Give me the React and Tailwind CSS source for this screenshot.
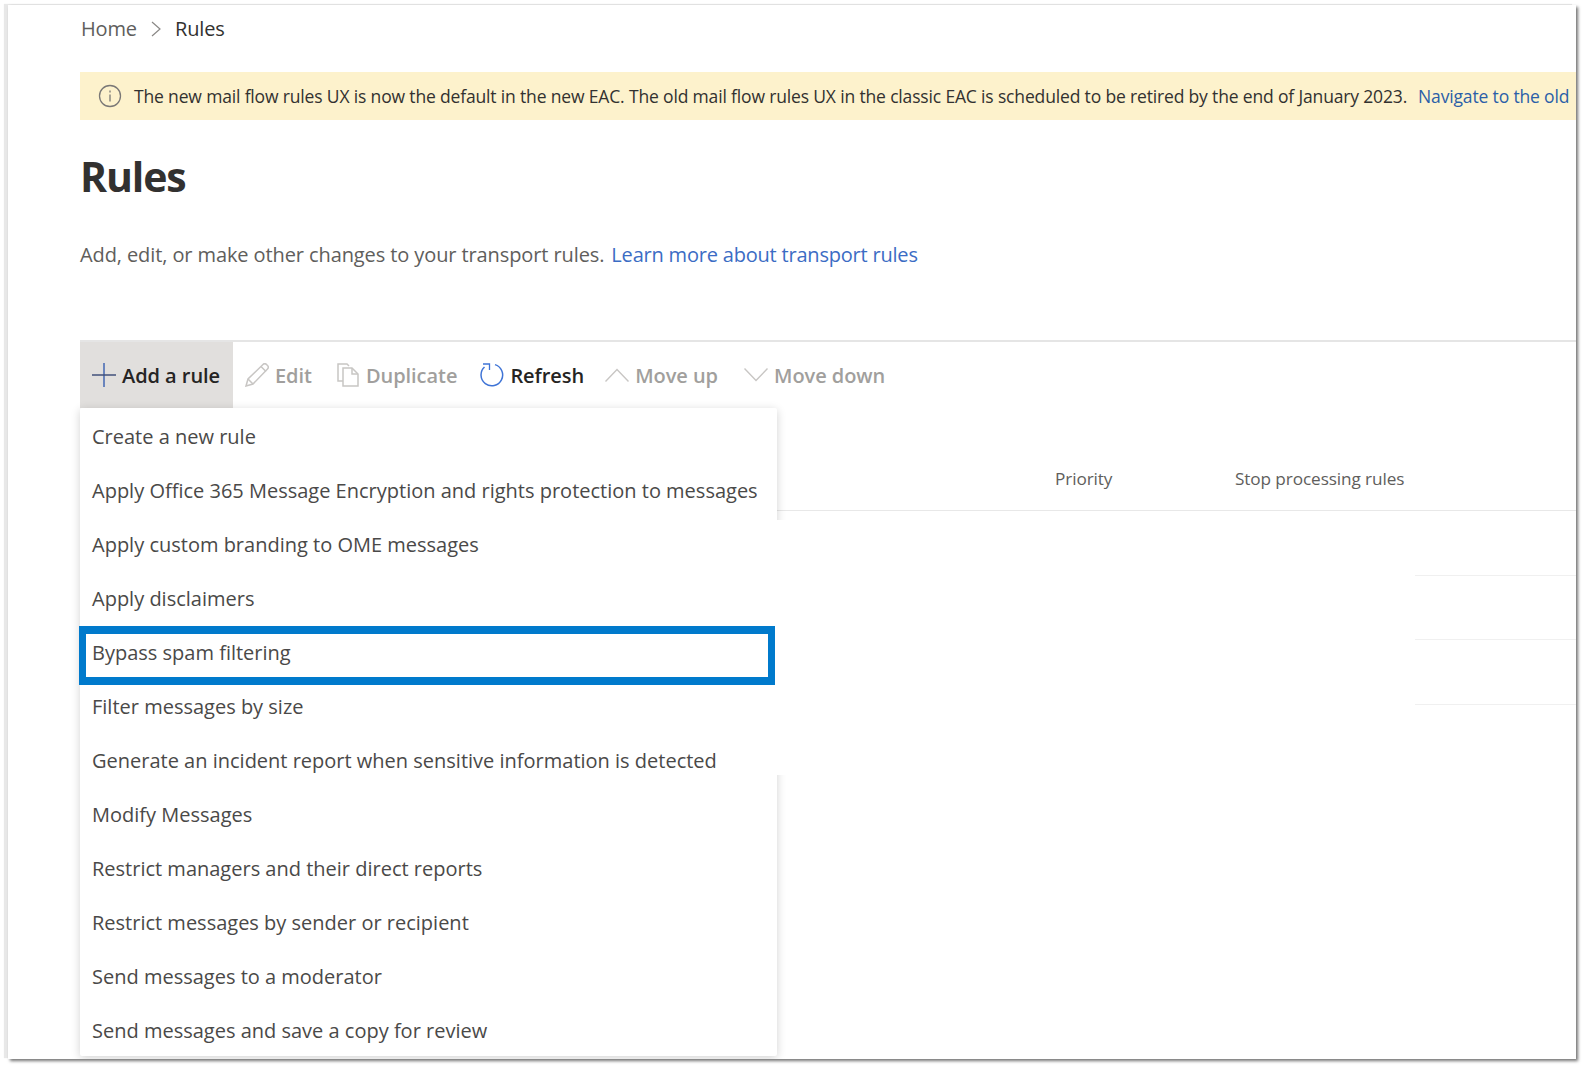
import React from "react";

const font = { fontFamily: '"Open Sans", "Noto Sans", sans-serif' };

const items = [
  "Create a new rule",
  "Apply Office 365 Message Encryption and rights protection to messages",
  "Apply custom branding to OME messages",
  "Apply disclaimers",
  "Bypass spam filtering",
  "Filter messages by size",
  "Generate an incident report when sensitive information is detected",
  "Modify Messages",
  "Restrict managers and their direct reports",
  "Restrict messages by sender or recipient",
  "Send messages to a moderator",
  "Send messages and save a copy for review",
];

function Tool({ icon, label, active, className = "" }) {
  return (
    <div className={`flex items-center h-full ${className}`}>
      <span className="flex items-center justify-center w-[24px]">{icon}</span>
      <span className={`ml-[6px] pt-[2px] text-[20px] font-semibold tracking-[-0.05px] ${active ? "text-[#252423]" : "text-[#a19f9d]"}`}>{label}</span>
    </div>
  );
}

export default function App() {
  return (
    <div className="w-[1585px] h-[1068px] bg-white overflow-hidden pt-[5px] pl-[8px]" style={font}>
      <div className="relative w-[1568px] h-[1054px] bg-white shadow-[2px_2px_3px_rgba(0,0,0,0.55),-4px_-1px_1px_rgba(0,0,0,0.09)] pl-[72px] overflow-hidden">
        <div className="flex items-center h-[48px] text-[20px] tracking-[-0.15px]">
          <span className="text-[#605e5c] ml-[1px]">Home</span>
          <svg className="ml-[13px] mr-[13px]" width="12" height="18" viewBox="0 0 12 18" fill="none" stroke="#8a8886" strokeWidth="1.2"><path d="M2 2l8 7-8 7" /></svg>
          <span className="text-[#323130]">Rules</span>
        </div>

        <div className="mt-[19px] h-[48px] bg-[#fdf2cc] flex items-center overflow-hidden whitespace-nowrap">
          <svg className="ml-[18px] shrink-0" width="24" height="24" viewBox="0 0 24 24" fill="none" stroke="#7a7876" strokeWidth="1.3">
            <circle cx="12" cy="12" r="10.5" />
            <path d="M12 10.5v7M12 6.5v2" />
          </svg>
          <span className="ml-[12px] text-[17.5px] tracking-[-0.16px] text-[#323130]">The new mail flow rules UX is now the default in the new EAC. The old mail flow rules UX in the classic EAC is scheduled to be retired by the end of January 2023.</span>
          <span className="ml-[11px] text-[17.5px] tracking-[-0.16px] text-[#2b5fa8]">Navigate to the old</span>
        </div>

        <h1 className="mt-[29px] h-[56px] flex items-center text-[41px] font-bold tracking-[-1.1px] text-[#323130]">Rules</h1>

        <p className="mt-[30px] h-[40px] flex items-center text-[20px] tracking-[-0.1px] text-[#605e5c]">
          Add, edit, or make other changes to your transport rules.
          <span className="ml-[7px] tracking-[-0.2px] text-[#3b6cc4]">Learn more about transport rules</span>
        </p>

        <div className="mt-[65px] border-t-2 border-[#e5e5e5] h-[68px] flex items-stretch">
          <Tool
            active
            label="Add a rule"
            className="w-[153px] pl-[12px] bg-[#e1dfdd]"
            icon={<svg width="24" height="24" viewBox="0 0 24 24" fill="none" stroke="#4267b2" strokeWidth="1.5"><path d="M12 0v24" /><path d="M0 12h24" stroke="#41507a" /></svg>}
          />
          <Tool
            label="Edit"
            className="ml-[12px]"
            icon={<svg width="24" height="24" viewBox="0 0 24 24" fill="none" stroke="#c8c6c4" strokeWidth="1.5"><path d="M1 23l2-7L18 1.5a2.5 2.5 0 0 1 3.5 0l1 1a2.5 2.5 0 0 1 0 3.5L8 21l-7 2z" /><path d="M3 16l5 5M16 3.5l5 5" /></svg>}
          />
          <Tool
            label="Duplicate"
            className="ml-[24px]"
            icon={<svg width="22" height="24" viewBox="0 0 22 24" fill="none" stroke="#c8c6c4" strokeWidth="1.5"><path d="M6 18H1V1h9l2 2" /><path d="M6 5h9l6 6v12H6z" /><path d="M15 5v6h6" /></svg>}
          />
          <Tool
            active
            label="Refresh"
            className="ml-[23px]"
            icon={<svg width="24" height="24" viewBox="0 0 24 24" fill="none" stroke="#3f74d6" strokeWidth="1.5"><path d="M4.5 4A10.8 10.8 0 1 0 15 1.6" /><path d="M3 1H9.5V7" strokeWidth="1.3" /></svg>}
          />
          <Tool
            label="Move up"
            className="ml-[21px]"
            icon={<svg width="24" height="14" viewBox="0 0 24 14" fill="none" stroke="#c8c6c4" strokeWidth="1.4"><path d="M0.5 13.5L12 1.5l11.5 12" /></svg>}
          />
          <Tool
            label="Move down"
            className="ml-[26px]"
            icon={<svg width="24" height="14" viewBox="0 0 24 14" fill="none" stroke="#c8c6c4" strokeWidth="1.4"><path d="M0.5 0.5L12 12.5l11.5-12" /></svg>}
          />
        </div>

        <div className="relative border-b border-[#e8e8e8] h-[103px] text-[17.2px] tracking-[-0.1px] text-[#605e5c]">
          <span className="absolute left-[975px] top-[58px]">Priority</span>
          <span className="absolute left-[1155px] top-[58px]">Stop processing rules</span>
        </div>
        <div className="ml-[1335px] h-[65px] border-b border-[#f0f0f0]" />
        <div className="ml-[1335px] h-[64px] border-b border-[#f0f0f0]" />
        <div className="ml-[1335px] h-[65px] border-b border-[#f0f0f0]" />

        <div className="absolute left-[72px] top-[403px] w-[697px] h-[648px] bg-white rounded-[2px] shadow-[0_2px_10px_rgba(0,0,0,0.18)] z-10">
          {items.map((t) => (
            <div key={t} className="h-[54px] pt-[4px] flex items-center pl-[12px] text-[20px] text-[#4a4948] whitespace-nowrap">{t}</div>
          ))}
        </div>
        <div className="absolute left-[769px] top-[515px] w-[30px] h-[255px] bg-white z-10" />
        <div className="absolute left-[71px] top-[621px] w-[696px] h-[59px] border-x-[7px] border-y-[8px] border-[#007acc] z-20" />
      </div>
    </div>
  );
}
